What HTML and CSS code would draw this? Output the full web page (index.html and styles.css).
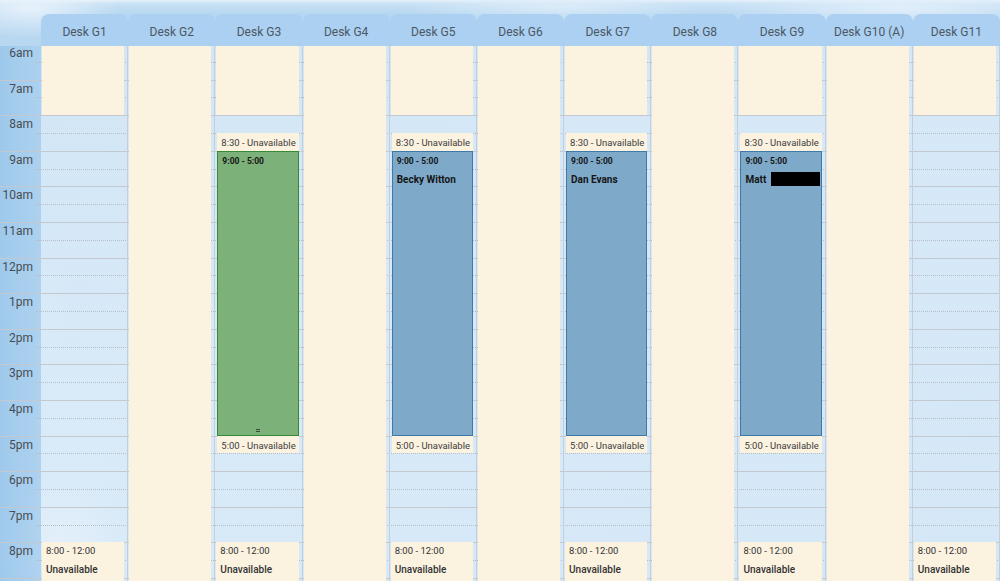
FILE: index.html
```html
<!DOCTYPE html>
<html>
<head>
<meta charset="utf-8">
<link rel="stylesheet" href="styles.css">
</head>
<body>
<div class="app">
  <div class="head">
    <div class="corner"></div>
    <div class="tab">Desk G1</div>
    <div class="tab">Desk G2</div>
    <div class="tab">Desk G3</div>
    <div class="tab">Desk G4</div>
    <div class="tab">Desk G5</div>
    <div class="tab">Desk G6</div>
    <div class="tab">Desk G7</div>
    <div class="tab">Desk G8</div>
    <div class="tab">Desk G9</div>
    <div class="tab">Desk G10 (A)</div>
    <div class="tab">Desk G11</div>
  </div>
  <div class="viewport">
    <div class="grid">
      <div class="lines">
        <div class="hour"><div class="half"></div></div>
        <div class="hour"><div class="half"></div></div>
        <div class="hour"><div class="half"></div></div>
        <div class="hour"><div class="half"></div></div>
        <div class="hour"><div class="half"></div></div>
        <div class="hour"><div class="half"></div></div>
        <div class="hour"><div class="half"></div></div>
        <div class="hour"><div class="half"></div></div>
        <div class="hour"><div class="half"></div></div>
        <div class="hour"><div class="half"></div></div>
        <div class="hour"><div class="half"></div></div>
        <div class="hour"><div class="half"></div></div>
        <div class="hour"><div class="half"></div></div>
        <div class="hour"><div class="half"></div></div>
        <div class="hour"><div class="half"></div></div>
        <div class="hour"><div class="half"></div></div>
      </div>
      <div class="times">
        <div class="label">6am</div>
        <div class="label">7am</div>
        <div class="label">8am</div>
        <div class="label">9am</div>
        <div class="label">10am</div>
        <div class="label">11am</div>
        <div class="label">12pm</div>
        <div class="label">1pm</div>
        <div class="label">2pm</div>
        <div class="label">3pm</div>
        <div class="label">4pm</div>
        <div class="label">5pm</div>
        <div class="label">6pm</div>
        <div class="label">7pm</div>
        <div class="label">8pm</div>
      </div>
      <div class="cols">
        <div class="col">
          <div class="block am"></div>
          <div class="block night"><div class="nt">8:00 - 12:00</div><div class="nu">Unavailable</div></div>
        </div>
        <div class="col"><div class="block full"></div></div>
        <div class="col">
          <div class="block am"></div>
          <div class="block pre">8:30 - Unavailable</div>
          <div class="event ev green"><div class="et">9:00 - 5:00</div><div class="handle"></div></div>
          <div class="block post">5:00 - Unavailable</div>
          <div class="block night"><div class="nt">8:00 - 12:00</div><div class="nu">Unavailable</div></div>
        </div>
        <div class="col"><div class="block full"></div></div>
        <div class="col">
          <div class="block am"></div>
          <div class="block pre">8:30 - Unavailable</div>
          <div class="event ev blue"><div class="et">9:00 - 5:00</div><div class="en">Becky Witton</div></div>
          <div class="block post">5:00 - Unavailable</div>
          <div class="block night"><div class="nt">8:00 - 12:00</div><div class="nu">Unavailable</div></div>
        </div>
        <div class="col"><div class="block full"></div></div>
        <div class="col">
          <div class="block am"></div>
          <div class="block pre">8:30 - Unavailable</div>
          <div class="event ev blue"><div class="et">9:00 - 5:00</div><div class="en">Dan Evans</div></div>
          <div class="block post">5:00 - Unavailable</div>
          <div class="block night"><div class="nt">8:00 - 12:00</div><div class="nu">Unavailable</div></div>
        </div>
        <div class="col"><div class="block full"></div></div>
        <div class="col">
          <div class="block am"></div>
          <div class="block pre">8:30 - Unavailable</div>
          <div class="event ev blue"><div class="et">9:00 - 5:00</div><div class="en">Matt <span class="redact"></span></div></div>
          <div class="block post">5:00 - Unavailable</div>
          <div class="block night"><div class="nt">8:00 - 12:00</div><div class="nu">Unavailable</div></div>
        </div>
        <div class="col"><div class="block full"></div></div>
        <div class="col">
          <div class="block am"></div>
          <div class="block night"><div class="nt">8:00 - 12:00</div><div class="nu">Unavailable</div></div>
        </div>
      </div>
    </div>
  </div>
</div>
</body>
</html>
```

FILE: styles.css
```css
html, body {
  margin: 0;
  padding: 0;
}
body {
  width: 1000px;
  height: 581px;
  overflow: hidden;
  font-family: Roboto, "Liberation Sans", sans-serif;
  background-color: #c4def3;
  background-image:
    radial-gradient(ellipse 90px 30px at 30px 8px, rgba(235,244,252,0.9), rgba(235,244,252,0) 100%),
    radial-gradient(ellipse 160px 20px at 560px 6px, rgba(225,239,250,0.8), rgba(225,239,250,0) 100%),
    radial-gradient(ellipse 200px 25px at 900px 8px, rgba(228,240,251,0.9), rgba(228,240,251,0) 100%),
    radial-gradient(ellipse 70px 60px at 60px 540px, rgba(240,247,253,0.95), rgba(240,247,253,0) 100%),
    radial-gradient(ellipse 60px 90px at 10px 300px, rgba(215,233,248,0.7), rgba(215,233,248,0) 100%),
    linear-gradient(180deg, #e6f1fa 0, #c6e0f4 4px, #b7d7f0 14px, #c9e2f5 100%);
}
.app {
  display: flex;
  flex-direction: column;
  height: 581px;
  padding-top: 14px;
  box-sizing: border-box;
}
.head {
  display: grid;
  grid-template-columns: 41px repeat(11, 1fr);
  height: 32px;
  flex: none;
}
.tab {
  background: #abd0f1;
  border-radius: 8px 8px 0 0;
  display: flex;
  align-items: center;
  justify-content: center;
  font-size: 12px;
  color: #4c5764;
  padding-top: 3px;
  box-sizing: border-box;
}
.viewport {
  flex: 1;
  overflow: hidden;
}
.grid {
  display: grid;
  grid-template-columns: 41px 1fr;
  margin-top: -2px;
}
.lines {
  grid-column: 1 / -1;
  grid-row: 1;
  background-image:
    linear-gradient(90deg, rgba(146,194,233,0.82) 0, rgba(160,202,236,0.75) 41px, rgba(0,0,0,0) 41px),
    linear-gradient(160deg, rgba(214,232,247,0.85), rgba(226,239,250,0.7) 40%, rgba(214,232,247,0.85) 100%);
}
.hour {
  height: 35.6px;
  border-top: 1px solid #c3c9cf;
  box-sizing: border-box;
}
.half {
  margin: 16.8px 0 0 36px;
  border-top: 1px dotted #b7bec5;
}
.times {
  grid-column: 1;
  grid-row: 1;
}
.label {
  height: 35.6px;
  box-sizing: border-box;
  padding: 2px 8px 0 0;
  text-align: right;
  font-size: 12px;
  line-height: 14px;
  color: #474d54;
}
.cols {
  grid-column: 2;
  grid-row: 1;
  display: grid;
  grid-template-columns: repeat(11, 1fr);
}
.col {
  display: grid;
  grid-template-rows: repeat(32, 17.8px);
  border-right: 1px solid #c6cdd4;
  min-width: 0;
}
.block {
  background: #fbf2e0;
  margin: 0 3px 0 1px;
  min-width: 0;
}
.am { grid-row: 1 / 5; }
.full { grid-row: 1 / -1; }
.pre { grid-row: 6 / 7; }
.ev { grid-row: 7 / 23; }
.post { grid-row: 23 / 24; }
.night { grid-row: 29 / 33; }
.pre, .post {
  margin-left: 2px;
  font-size: 9.5px;
  line-height: 12px;
  padding: 4px 0 0 4px;
  color: #3d3d3d;
  white-space: nowrap;
  overflow: hidden;
}
.nt {
  font-size: 9.5px;
  line-height: 11px;
  padding: 3px 0 0 4px;
  color: #333;
}
.nu {
  font-size: 10px;
  line-height: 12px;
  margin-top: 8px;
  padding-left: 4px;
  font-weight: 500;
  color: #333;
}
.event {
  margin: 0 3px 0 2px;
  border: 1px solid #3d79ab;
  background: #7ea9c9;
  box-sizing: border-box;
  padding: 4px 0 0 4px;
  color: #151515;
  position: relative;
  min-width: 0;
}
.event.green {
  background: #7db17a;
  border-color: #378a35;
}
.et {
  font-size: 8.5px;
  line-height: 11px;
  font-weight: 700;
}
.en {
  font-size: 10px;
  line-height: 12px;
  font-weight: 700;
  margin-top: 7px;
  white-space: nowrap;
}
.redact {
  display: inline-block;
  width: 49px;
  height: 14px;
  background: #000;
  vertical-align: middle;
  margin-left: 2px;
  margin-top: -2px;
}
.handle {
  position: absolute;
  left: 50%;
  bottom: 3px;
  width: 4px;
  height: 1px;
  margin-left: -2px;
  border-top: 1px solid #2f4f2f;
  border-bottom: 1px solid #2f4f2f;
}
```
